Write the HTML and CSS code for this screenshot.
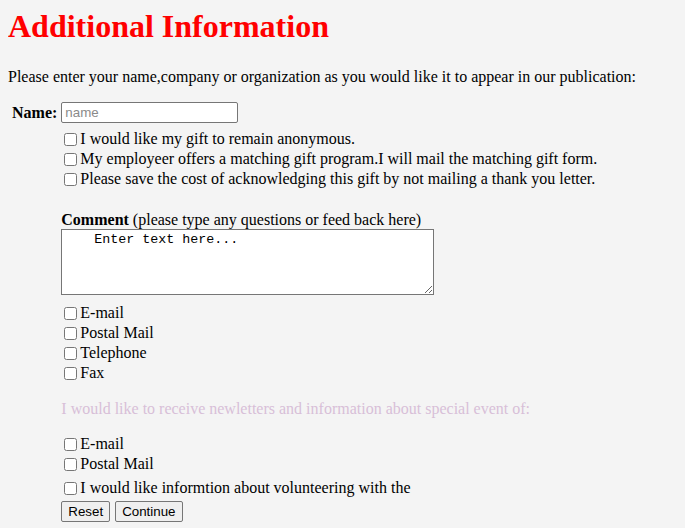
FILE: index.html
```html
<!DOCTYPE html>
<html>
<head>
<meta charset="utf-8">
<title>Additional Information</title>
<link rel="stylesheet" href="styles.css">
</head>
<body>
<h1 class="title">Additional Information</h1>
<p class="intro">Please enter your name,company or organization as you would like it to appear in our publication:</p>
<table class="form-table">
  <tr>
    <th class="label-cell">Name:</th>
    <td><input class="name-input" type="text" placeholder="name"></td>
  </tr>
  <tr>
    <td></td>
    <td>
      <div class="checks first">
        <label class="check"><input type="checkbox">I would like my gift to remain anonymous.</label>
        <label class="check"><input type="checkbox">My employeer offers a matching gift program.I will mail the matching gift form.</label>
        <label class="check"><input type="checkbox">Please save the cost of acknowledging this gift by not mailing a thank you letter.</label>
      </div>
      <div class="comment-label"><b>Comment</b> (please type any questions or feed back here)</div>
      <textarea class="comment-box">    Enter text here...</textarea>
      <div class="checks contact">
        <label class="check"><input type="checkbox">E-mail</label>
        <label class="check"><input type="checkbox">Postal Mail</label>
        <label class="check"><input type="checkbox">Telephone</label>
        <label class="check"><input type="checkbox">Fax</label>
      </div>
      <p class="news">I would like to receive newletters and information about special event of:</p>
      <div class="checks">
        <label class="check"><input type="checkbox">E-mail</label>
        <label class="check"><input type="checkbox">Postal Mail</label>
      </div>
      <div class="checks volunteer">
        <label class="check"><input type="checkbox">I would like informtion about volunteering with the</label>
      </div>
      <div class="buttons">
        <button class="btn" type="reset">Reset</button>
        <button class="btn" type="submit">Continue</button>
      </div>
    </td>
  </tr>
</table>
</body>
</html>
```

FILE: styles.css
```css
html, body {
  background: #f4f4f4;
}
body {
  margin: 8px;
  font-family: "Liberation Serif", "Times New Roman", serif;
  font-size: 16px;
  color: #000;
}
.title {
  margin: 0 0 23px 0;
  font-size: 32px;
  font-weight: bold;
  color: #ff0000;
}
.intro {
  margin: 0 0 16px 0;
}
.form-table {
  border-spacing: 2px;
  margin: -3px 0 0 1px;
}
.form-table td, .form-table th {
  padding: 1px;
  vertical-align: top;
}
.label-cell {
  font-weight: bold;
  vertical-align: middle !important;
}
.name-input {
  width: 177px;
  height: 21px;
  box-sizing: border-box;
  margin: 0;
  padding: 1px 3px;
  border: 1px solid #767676;
  border-radius: 2px;
  font-family: "Liberation Sans", Arial, sans-serif;
  font-size: 13.33px;
  background: #fff;
}
.name-input::placeholder {
  color: #8a8a8a;
}
.checks {
  display: flex;
  flex-direction: column;
}
.checks.first {
  margin-top: 2px;
}
.check {
  display: flex;
  align-items: center;
  height: 20px;
  white-space: nowrap;
}
.check input {
  width: 13px;
  height: 13px;
  margin: 0 3px 0 3px;
}
.comment-label {
  margin-top: 21px;
  line-height: 19px;
}
.comment-box {
  display: block;
  width: 373px;
  height: 66px;
  box-sizing: border-box;
  margin: 0 0 8px 0;
  padding: 2px 2px 2px 0;
  border: 1px solid #767676;
  font-family: "Liberation Mono", "Courier New", monospace;
  font-size: 13.33px;
  background: #fff;
  resize: both;
}
.news {
  margin: 17px 0 16px 0;
  color: #d8bfd8;
}
.volunteer {
  margin-top: 4px;
}
.buttons {
  display: flex;
  gap: 5px;
  margin-top: 3px;
}
.btn {
  height: 21px;
  margin: 0;
  padding: 1px 6px;
  border: 1px solid #767676;
  border-radius: 2px;
  background: #efefef;
  font-family: "Liberation Sans", Arial, sans-serif;
  font-size: 13.33px;
  color: #000;
}
```
